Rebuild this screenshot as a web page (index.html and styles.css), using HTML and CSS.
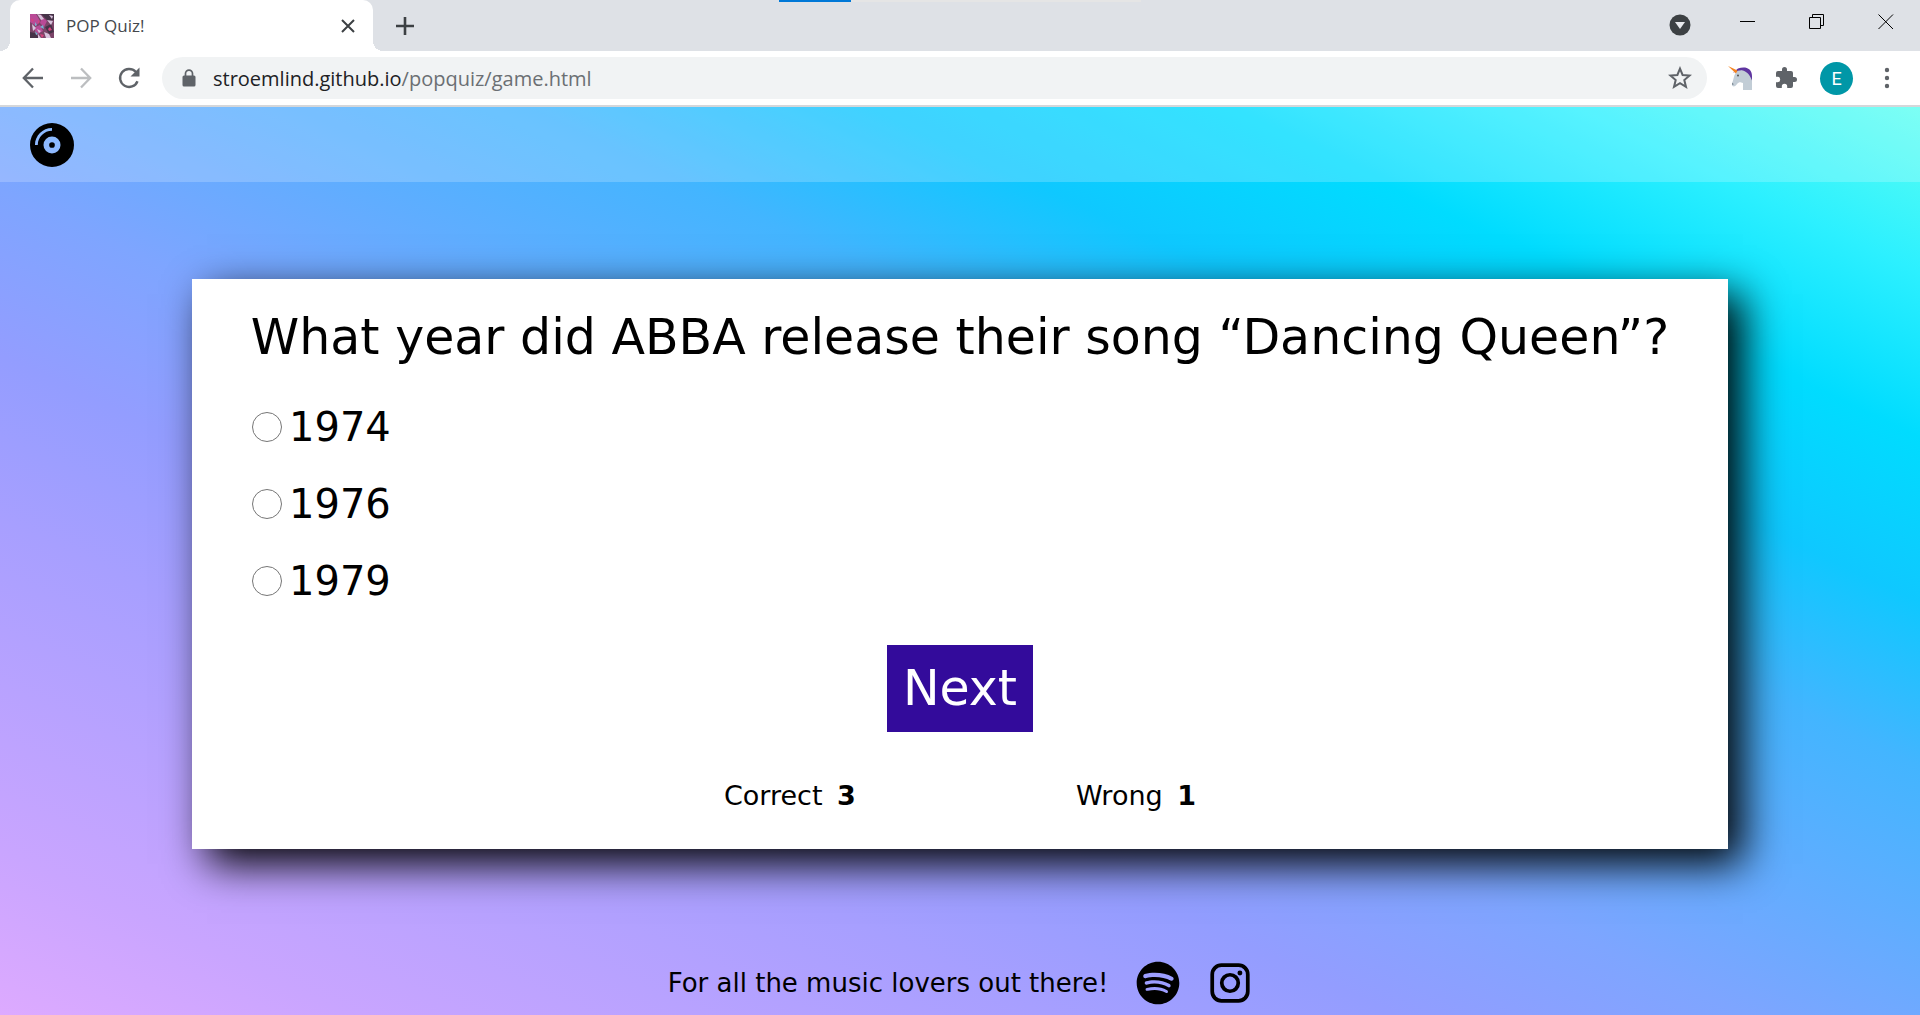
FILE: index.html
```html
<!DOCTYPE html>
<html lang="en">
<head>
<meta charset="utf-8">
<meta name="viewport" content="width=device-width, initial-scale=1">
<title>POP Quiz!</title>
<link rel="stylesheet" href="styles.css">
</head>
<body>
<div class="browser">
  <div class="tabstrip">
    <div class="progress"><div class="progress-fill"></div></div>
    <div class="tab">
      <svg class="favicon" viewBox="0 0 24 24" aria-hidden="true">
        <path fill="#7b4468" d="M0 0h24v24H0z"/>
        <path fill="#b94a96" d="M0 0h6l4 7-4 5-6-4zM3 14l7-3 3 6-5 3zM12 3l5 4-3 6-4-4z"/>
        <path fill="#463348" d="M11 0h13v6l-6 1zM15 13l6-3 3 8-5 2zM0 18l5 1 4 5H0z"/>
        <path fill="#d8c3dc" d="M7 0l4 1 3 4-3 1zM17 6l6 1-2 4zM2 10l4 4-3 3zM14 18l5 2 2 4h-5zM7 15l4 2-2 2zM19 1l4 1-1 3zM8 20l3 4H8z"/>
        <path fill="#d8437e" d="M18 15l2-2 2 3-3 1zM8 6l2 2-2 2zM10 20l4 1-2 3zM1 4l3 2-2 2z"/>
        <path fill="#79b2d3" d="M5 8l2 3-2 1zM10 13l3-2 1 4zM5 17l3 3-2 1z"/>
      </svg>
      <span class="tab-title">POP Quiz!</span>
      <button class="tab-close" aria-label="Close tab"><svg viewBox="0 0 14 14"><path d="M1 1l12 12M13 1L1 13" stroke="#3c4043" stroke-width="2" fill="none"/></svg></button>
    </div>
    <button class="new-tab" aria-label="New tab"><svg viewBox="0 0 18 18"><path d="M9 0v18M0 9h18" stroke="#3c4043" stroke-width="2.6" fill="none"/></svg></button>
    <div class="window-controls">
      <button class="search-tabs" aria-label="Search tabs"><svg viewBox="0 0 22 22"><circle cx="11" cy="11" r="10.5" fill="#3c4043"/><path d="M6 8h10l-5 7z" fill="#e8eaed"/></svg></button>
      <button aria-label="Minimise"><svg viewBox="0 0 16 16"><path d="M0 7.5h15" stroke="#000"/></svg></button>
      <button aria-label="Restore"><svg viewBox="0 0 16 16"><path d="M.5 3.500h11v11H.5zM3.500 3.500v-3h11v11h-3" stroke="#000" fill="none"/></svg></button>
      <button aria-label="Close"><svg viewBox="0 0 16 16"><path d="M.5.5l14.500 14.500M15 .5L.5 15" stroke="#000" fill="none"/></svg></button>
    </div>
  </div>
  <div class="toolbar">
    <div class="nav-buttons">
      <button aria-label="Back"><svg viewBox="0 0 24 24"><path d="M22 12H3M12 2.500L2.800 12l9.200 9.500" stroke="#5f6368" stroke-width="2.300" fill="none"/></svg></button>
      <button aria-label="Forward"><svg viewBox="0 0 24 24"><path d="M2 12h19M12 2.500L21.200 12 12 21.500" stroke="#bcbec0" stroke-width="2.300" fill="none"/></svg></button>
      <button aria-label="Reload"><svg viewBox="0 0 24 24"><path d="M20.500 15.200a9 9 0 1 1-1.800-9.400l2 2.200" stroke="#5f6368" stroke-width="2.400" fill="none"/><path d="M22.500 1.500v9h-9z" fill="#5f6368"/></svg></button>
    </div>
    <div class="address">
      <svg class="lock" viewBox="0 0 14 18" aria-hidden="true"><path d="M3.500 8V4.600a3.500 3.500 0 0 1 7 0V8" stroke="#5f6368" stroke-width="1.700" fill="none"/><rect x=".5" y="6.500" width="13" height="11" rx="1.500" fill="#5f6368"/></svg>
      <span class="url">stroemlind.github.io<span class="path">/popquiz/game.html</span></span>
      <button aria-label="Bookmark"><svg viewBox="0 0 24 24"><path d="M12 2.600l2.600 6.400 7 .6-5.300 4.500 1.700 6.800-6-3.700-6 3.700 1.700-6.800-5.300-4.500 7-.6z" fill="none" stroke="#5f6368" stroke-width="2"/></svg></button>
    </div>
    <div class="extensions">
      <svg viewBox="0 0 24 24" aria-hidden="true"><path d="M10 2.500c7-2.500 14-.5 14 7.500v9l-5-9-5-5.500-9 2z" fill="#5f35a0"/><path d="M15 24v-7c-2-.5-3-1-4-.5-2 .500-2.500 3.500-5 4-1.500 0-2.500-1-2-2.500L6.500 9C8 6 10 4.500 11 4.500h4c5 1.500 7.500 6 9 10V24z" fill="#c2cdd6"/><path d="M0 0l9.500 4.500-1.500 3z" fill="#f5841f"/><circle cx="10" cy="9.500" r=".9" fill="#444"/><path d="M4 16.500l2 1.800-2 .7z" fill="#7e8b96"/></svg>
      <button aria-label="Extensions"><svg viewBox="0 0 24 24"><path d="M20.500 11H19V7a2 2 0 0 0-2-2h-4V3.500a2.500 2.500 0 0 0-5 0V5H4a2 2 0 0 0-2 2v3.800h1.500a2.700 2.700 0 0 1 0 5.400H2V20a2 2 0 0 0 2 2h3.800v-1.500a2.700 2.700 0 0 1 5.400 0V22H17a2 2 0 0 0 2-2v-4h1.500a2.500 2.500 0 0 0 0-5z" fill="#5f6368"/></svg></button>
      <button class="avatar" aria-label="Profile">E</button>
      <button aria-label="Menu"><svg viewBox="0 0 24 24"><path d="M9.800 4a2.200 2.200 0 1 0 4.400 0 2.200 2.200 0 1 0-4.400 0M9.800 12a2.200 2.200 0 1 0 4.400 0 2.200 2.200 0 1 0-4.400 0M9.800 20a2.200 2.200 0 1 0 4.400 0 2.200 2.200 0 1 0-4.400 0" fill="#5f6368"/></svg></button>
    </div>
  </div>
</div>
<div class="site">
  <header class="site-header">
    <a href="#" aria-label="Home"><svg class="icon" viewBox="0 0 496 496"><path fill-rule="evenodd" d="M248 0a248 248 0 1 0 0 496 248 248 0 0 0 0-496zM88 248H56C56 142 142 56 248 56v32C160 88 88 160 88 248zM248 344a96 96 0 1 1 0-192 96 96 0 0 1 0 192zM248 216a32 32 0 1 0 0 64 32 32 0 0 0 0-64z"/></svg></a>
  </header>
  <main class="card">
    <h1>What year did ABBA release their song “Dancing Queen”?</h1>
    <form class="quiz">
      <div class="options">
        <label class="option"><input type="radio" name="answer" value="1974">1974</label>
        <label class="option"><input type="radio" name="answer" value="1976">1976</label>
        <label class="option"><input type="radio" name="answer" value="1979">1979</label>
      </div>
      <button class="next" type="button">Next</button>
    </form>
    <div class="scores">
      <p>Correct <strong>3</strong></p>
      <p>Wrong <strong>1</strong></p>
    </div>
  </main>
  <footer class="site-footer">
    <p>For all the music lovers out there!</p>
    <a href="#" aria-label="Spotify"><svg class="icon" viewBox="0 0 496 512"><path d="M248 8C111.100 8 0 119.100 0 256s111.100 248 248 248 248-111.100 248-248S384.900 8 248 8zm100.700 364.900c-4.200 0-6.800-1.300-10.700-3.600-62.400-37.600-135-39.200-206.700-24.500-3.900 1-9 2.600-11.900 2.600-9.700 0-15.800-7.700-15.800-15.800 0-10.300 6.100-15.200 13.600-16.800 81.900-18.100 165.600-16.500 237 26.200 6.100 3.900 9.700 7.400 9.700 16.500s-7.100 15.400-15.200 15.400zm26.900-65.600c-5.200 0-8.700-2.300-12.300-4.200-62.500-37-155.700-51.900-238.600-29.400-4.800 1.300-7.400 2.600-11.900 2.600-10.700 0-19.400-8.700-19.400-19.400s5.200-17.800 15.500-20.700c27.800-7.800 56.200-13.600 97.800-13.600 64.900 0 127.600 16.100 177 45.500 8.100 4.800 11.300 11 11.300 19.700-.1 10.800-8.500 19.500-19.400 19.500zm31-76.200c-5.200 0-8.400-1.300-12.900-3.900-71.200-42.500-198.500-52.700-280.900-29.700-3.600 1-8.100 2.600-12.900 2.600-13.200 0-23.300-10.300-23.300-23.600 0-13.600 8.400-21.300 17.400-23.900 35.200-10.300 74.600-15.200 117.500-15.200 73 0 149.500 15.200 205.400 47.800 7.800 4.500 12.900 10.700 12.900 22.600 0 13.600-11 23.300-23.200 23.300z"/></svg></a>
    <a href="#" aria-label="Instagram"><svg class="icon" viewBox="0 0 448 448" fill="none" stroke="#000" stroke-width="38"><rect x="43" y="43" width="362" height="362" rx="94"/><circle cx="224" cy="224" r="84"/><circle cx="325" cy="122" r="25" fill="#000" stroke="none"/></svg></a>
  </footer>
</div>
</body>
</html>
```
FILE: styles.css
```css
* {
  box-sizing: border-box;
}

body {
  margin: 0;
  min-height: 100vh;
  display: flex;
  flex-direction: column;
  font-family: "DejaVu Sans", sans-serif;
  color: #000;
}

button {
  padding: 0;
  border: 0;
  background: none;
  font: inherit;
  color: inherit;
}

svg {
  display: block;
}

h1,
p {
  margin: 0;
  font-weight: 400;
}

/* Browser window */
.browser {
  font-family: "Open Sans", sans-serif;
  background: #fff;
  border-bottom: 2px solid #d5d7da;
}

.tabstrip {
  position: relative;
  display: flex;
  height: 51px;
  padding-left: 10px;
  background: #dee1e6;
}

.progress {
  position: absolute;
  top: 0;
  left: 50%;
  width: 362px;
  height: 2px;
  margin-left: -181px;
  background: #e5e5e5;
}

.progress-fill {
  width: 20%;
  height: 100%;
  background: #0078d7;
}

.tab {
  position: relative;
  display: flex;
  align-items: center;
  gap: 12px;
  width: 363px;
  padding: 0 18px 0 20px;
  background: #fff;
  border-radius: 10px 10px 0 0;
}

.tab::before,
.tab::after {
  content: "";
  position: absolute;
  bottom: 0;
  width: 10px;
  height: 10px;
}

.tab::before {
  right: 100%;
  background: radial-gradient(circle at 0 0, transparent 10px, #fff 10px);
}

.tab::after {
  left: 100%;
  background: radial-gradient(circle at 100% 0, transparent 10px, #fff 10px);
}

.favicon {
  width: 24px;
  height: 24px;
}

.tab-title {
  flex: 1;
  font-size: 17px;
  color: #45484c;
}

.tab-close svg {
  width: 14px;
  height: 14px;
}

.new-tab {
  margin-left: 23px;
}

.new-tab svg {
  width: 18px;
  height: 18px;
}

.window-controls {
  display: flex;
  align-items: center;
  gap: 53px;
  height: 44px;
  margin-left: auto;
  padding-right: 26px;
}

.window-controls svg {
  width: 16px;
  height: 16px;
}

.window-controls .search-tabs {
  padding-top: 6px;
  margin-right: -4px;
}

.window-controls .search-tabs svg {
  width: 22px;
  height: 22px;
}

.toolbar {
  display: flex;
  align-items: center;
  gap: 21px;
  height: 54px;
  padding: 0 21px;
}

.toolbar svg {
  width: 24px;
  height: 24px;
}

.nav-buttons {
  display: flex;
  gap: 24px;
}

.address {
  flex: 1;
  display: flex;
  align-items: center;
  gap: 17px;
  height: 42px;
  padding: 0 15px 0 20px;
  background: #f1f3f4;
  border-radius: 21px;
}

.address .lock {
  width: 14px;
  height: 18px;
}

.url {
  flex: 1;
  font-size: 20px;
  color: #202124;
}

.path {
  color: #6b6f73;
}

.extensions {
  display: flex;
  align-items: center;
  gap: 22px;
}

.avatar {
  width: 33px;
  height: 33px;
  border-radius: 50%;
  background: #0097a7;
  color: #fff;
  font-family: Roboto, sans-serif;
  font-size: 18px;
}

/* Quiz page */
.site {
  flex: 1;
  display: flex;
  flex-direction: column;
  background: linear-gradient(to top right, #ddaaff, #c9a5ff, #b8a2ff, #a79fff, #939dff, #7ea5ff, #60adff, #43b5ff, #0fc8ff, #00dcff, #2cf0ff, #5cfff2);
}

.icon {
  width: 44px;
  height: 44px;
}

.site-header {
  display: flex;
  align-items: center;
  height: 75px;
  padding: 0 30px;
  background: rgba(255, 255, 255, 0.2);
}

.card {
  width: 80%;
  margin: 97px auto;
  padding: 30px 32px 33px;
  background: #fff;
  box-shadow: 15px 15px 40px #000;
}

h1 {
  font-size: 49px;
  line-height: 58px;
  text-align: center;
}

.quiz {
  display: flex;
  flex-direction: column;
  align-items: center;
  gap: 34px;
  margin-top: 30px;
  padding: 0 28px;
}

.options {
  align-self: stretch;
  display: grid;
  gap: 17px;
}

.option {
  display: flex;
  align-items: center;
  gap: 7px;
  font-size: 40px;
  line-height: 60px;
}

.option input {
  appearance: none;
  width: 30px;
  height: 30px;
  margin: 0;
  border: 1px solid #767676;
  border-radius: 50%;
  background: #fff;
}

.next {
  height: 87px;
  padding: 0 16px;
  background: #330b9b;
  color: #fff;
  font-size: 49px;
}

.scores {
  display: flex;
  justify-content: center;
  gap: 220px;
  margin-top: 44px;
  font-size: 27px;
  line-height: 40px;
}

.scores strong {
  margin-left: 6px;
}

.site-footer {
  display: flex;
  align-items: center;
  justify-content: center;
  gap: 28px;
  margin: auto 0 10px;
  font-size: 26px;
}
```
